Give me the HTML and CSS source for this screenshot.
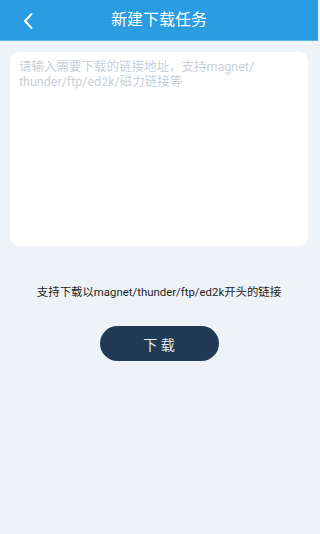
FILE: index.html
```html
<!DOCTYPE html>
<html lang="zh-CN">
<head>
<meta charset="utf-8">
<meta name="viewport" content="width=device-width, initial-scale=1">
<title>新建下载任务</title>
<link rel="stylesheet" href="styles.css">
</head>
<body>
<div class="page">
  <header class="topbar">
    <button class="back" aria-label="返回">
      <svg width="12" height="18" viewBox="0 0 12 18"><path d="M9.5 2 L3 9 L9.5 16" fill="none" stroke="#fff" stroke-width="2" stroke-linecap="round" stroke-linejoin="round"/></svg>
    </button>
    <h1 class="title">新建下载任务</h1>
  </header>
  <main class="content">
    <div class="card">
      <div class="placeholder">请输入需要下载的链接地址，支持magnet/<br>thunder/ftp/ed2k/磁力链接等</div>
    </div>
    <p class="hint">支持下载以magnet/thunder/ftp/ed2k开头的链接</p>
    <button class="download">下 载</button>
  </main>
</div>
</body>
</html>
```

FILE: styles.css
```css
* { box-sizing: border-box; }
html, body {
  margin: 0;
  padding: 0;
  background: #eef3f7;
  font-family: Roboto, "Noto Sans CJK SC", "Noto Sans", sans-serif;
}
.page {
  width: 318px;
  min-height: 534px;
  display: flex;
  flex-direction: column;
}
.topbar {
  height: 41px;
  background: #2a9ce2;
  border-bottom: 1px solid #5cb4ea;
  display: flex;
  align-items: center;
  justify-content: center;
  position: relative;
}
.back {
  position: absolute;
  left: 21px;
  top: 11px;
  width: 14px;
  height: 20px;
  padding: 0;
  border: 0;
  background: none;
  display: flex;
  align-items: center;
  justify-content: center;
}
.title {
  margin: 0;
  font-size: 16px;
  font-weight: 400;
  color: #fff;
  line-height: 20px;
}
.content {
  padding: 11px 10px 0 10px;
  display: flex;
  flex-direction: column;
  align-items: center;
}
.card {
  width: 298px;
  height: 194px;
  background: #fff;
  border-radius: 9px;
  padding: 7px 9px;
}
.placeholder {
  font-size: 12.5px;
  line-height: 15px;
  color: #c9d0d8;
}
.hint {
  margin: 38px 0 0 0;
  font-size: 11.4px;
  line-height: 16px;
  color: #1e1e1e;
  text-align: center;
}
.download {
  margin-top: 26px;
  width: 119px;
  height: 35px;
  border: 0;
  border-radius: 18px;
  background: #213b56;
  color: #e6ebf0;
  font-family: inherit;
  font-size: 14px;
  padding: 0;
}
```
